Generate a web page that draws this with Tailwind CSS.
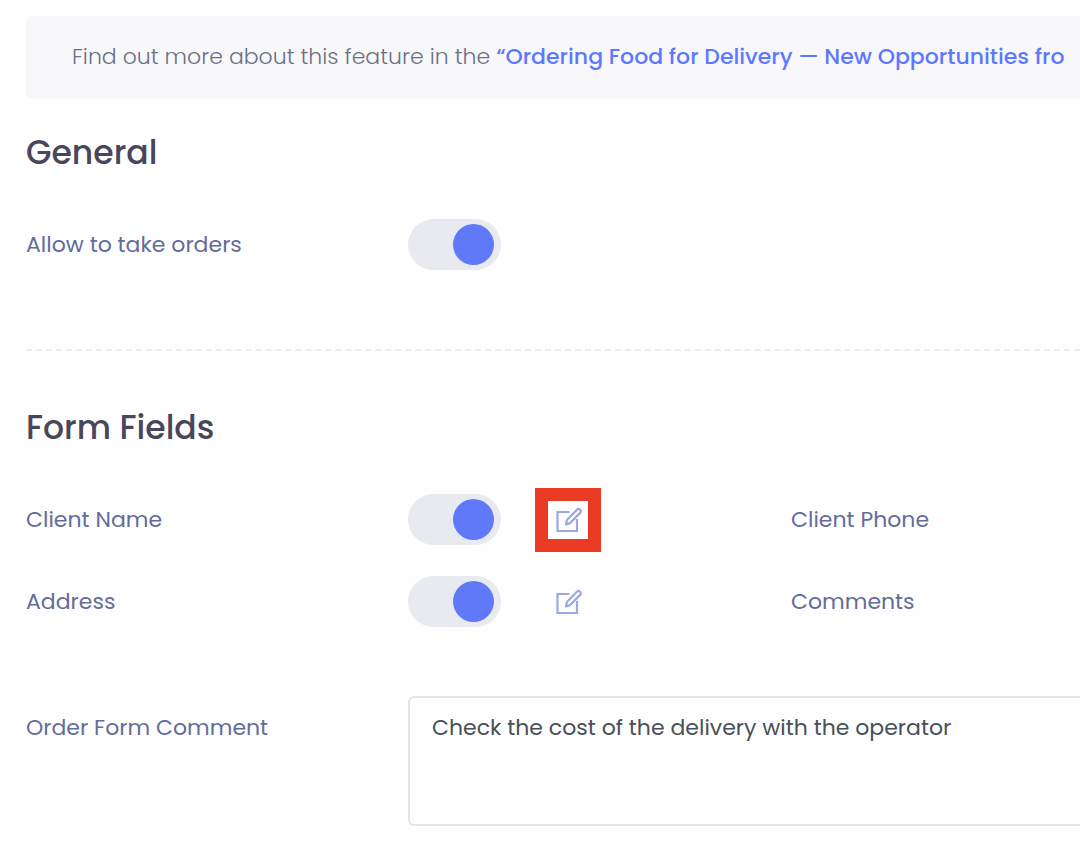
<!DOCTYPE html>
<html lang="en">

<head>
    <meta charset="utf-8">
    <title>Order settings</title>
    <script src="https://cdn.jsdelivr.net/npm/@tailwindcss/browser@4"></script>
</head>

<body class="bg-[#fefefe] font-['Poppins','Inter',sans-serif] text-[22px] leading-9 text-[#646c9a] overflow-x-hidden">

    <main class="pl-[26px] pt-4 pb-4">

        <!-- Info banner -->
        <div class="flex items-center h-[82px] pl-[45px] rounded-l-md border border-r-0 border-[#f5f5fa] bg-[#f8f8fb] overflow-hidden whitespace-nowrap">
            <p class="text-[#6c7083] font-light">Find out more about this feature in the
                <a href="#" class="font-medium text-[#5d78ff]">“Ordering Food for Delivery — New Opportunities fro</a>
            </p>
        </div>

        <!-- General -->
        <section>
            <h2 class="pt-8 text-[33px] leading-[46px] font-medium text-[#48465b]">General</h2>
            <div class="grid grid-cols-[382px_1fr] items-center mt-[43px]">
                <label for="orders">Allow to take orders</label>
                <input id="orders" type="checkbox" checked class="appearance-none flex items-center justify-start checked:justify-end w-[93px] h-[51px] px-[7px] rounded-full bg-[#e8eaef] before:size-[41px] before:rounded-full before:bg-[#5f79f8]">
            </div>
        </section>

        <hr class="mt-[79px] border-t-2 border-dashed border-[#ebedf2]">

        <!-- Form fields -->
        <section>
            <h2 class="pt-[54px] text-[33px] leading-[46px] font-medium text-[#48465b]">Form Fields</h2>
            <div class="grid grid-cols-[382px_383px_1fr] items-center gap-y-[31px] mt-[43px]">
                <label for="name">Client Name</label>
                <div class="flex items-center gap-[47px]">
                    <input id="name" type="checkbox" checked class="appearance-none flex items-center justify-start checked:justify-end w-[93px] h-[51px] px-[7px] rounded-full bg-[#e8eaef] before:size-[41px] before:rounded-full before:bg-[#5f79f8]">
                    <button type="button" aria-label="Edit client name" class="flex items-center justify-center w-10 h-[38px] bg-white outline-[13px] outline-solid outline-[#ea3c24]">
                        <svg class="w-7 h-[26px]" viewBox="0 0 28 26" fill="none" stroke="#9ba8e1" stroke-width="2.2">
                            <path d="M15.5 5H3.5v19h19.500V12" />
                            <path d="M12 17.500l.9-4.600 10-10.200a2.200 2.200 0 0 1 3.200 3.200l-10 10.200z" stroke-linejoin="round" />
                        </svg>
                    </button>
                </div>
                <span>Client Phone</span>

                <label for="address">Address</label>
                <div class="flex items-center gap-[47px]">
                    <input id="address" type="checkbox" checked class="appearance-none flex items-center justify-start checked:justify-end w-[93px] h-[51px] px-[7px] rounded-full bg-[#e8eaef] before:size-[41px] before:rounded-full before:bg-[#5f79f8]">
                    <button type="button" aria-label="Edit address" class="flex items-center justify-center w-10 h-[38px]">
                        <svg class="w-7 h-[26px]" viewBox="0 0 28 26" fill="none" stroke="#9ba8e1" stroke-width="2.2">
                            <path d="M15.5 5H3.5v19h19.500V12" />
                            <path d="M12 17.500l.9-4.600 10-10.200a2.200 2.200 0 0 1 3.200 3.200l-10 10.200z" stroke-linejoin="round" />
                        </svg>
                    </button>
                </div>
                <span>Comments</span>
            </div>

            <div class="grid grid-cols-[382px_1fr] items-start mt-[69px]">
                <label for="comment" class="pt-[14px]">Order Form Comment</label>
                <textarea id="comment" class="block w-full h-[130px] px-[22px] py-3 rounded-l-md border-2 border-r-0 border-[#e2e5ec] bg-[#fefefe] text-[#495057] resize-none">Check the cost of the delivery with the operator</textarea>
            </div>
        </section>

    </main>

</body>

</html>
